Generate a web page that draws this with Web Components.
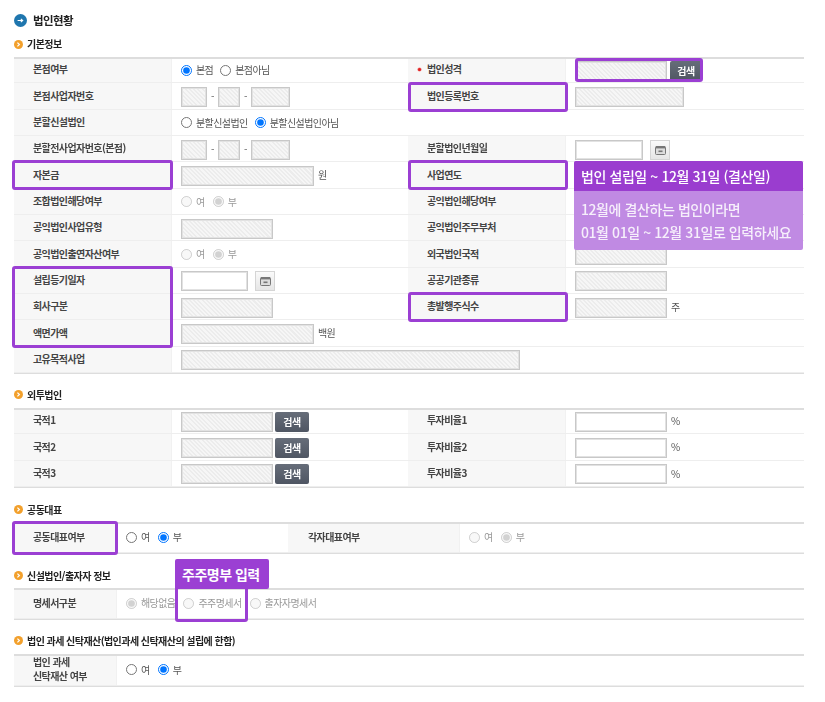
<!DOCTYPE html>
<html lang="ko"><head><meta charset="utf-8">
<style>
html,body{margin:0;background:#fff}
body{font:10px/14px "Noto Sans CJK KR","Noto Sans",sans-serif;color:#333;letter-spacing:-.58px}
</style></head><body>
<corp-page>
  <page-title>법인현황</page-title>
  <sec-title style="margin-top:10px">기본정보</sec-title>
  <form-grid columns="158px 236px 158px 1fr" style="margin-top:6px" rows="26.33px">
    <f-th>본점여부</f-th>
    <f-td><r-opt checked>본점</r-opt><r-opt gap="7">본점아님</r-opt></f-td>
    <f-th req>법인성격</f-th>
    <f-td><f-in w="92"></f-in><f-btn style="margin-left:3px">검색</f-btn></f-td>

    <f-th>본점사업자번호</f-th>
    <f-td><f-in w="26"></f-in><f-dash></f-dash><f-in w="22"></f-in><f-dash></f-dash><f-in w="39"></f-in></f-td>
    <f-th>법인등록번호</f-th>
    <f-td><f-in w="109"></f-in></f-td>

    <f-th>분할신설법인</f-th>
    <f-td span="3"><r-opt>분할신설법인</r-opt><r-opt checked gap="7">분할신설법인아님</r-opt></f-td>

    <f-th>분할전사업자번호(본점)</f-th>
    <f-td><f-in w="26"></f-in><f-dash></f-dash><f-in w="22"></f-in><f-dash></f-dash><f-in w="39"></f-in></f-td>
    <f-th>분할법인년월일</f-th>
    <f-td><f-in w="68" blank></f-in><f-cal></f-cal></f-td>

    <f-th>자본금</f-th>
    <f-td><f-in w="133"></f-in><f-unit>원</f-unit></f-td>
    <f-th>사업연도</f-th>
    <f-td></f-td>

    <f-th>조합법인해당여부</f-th>
    <f-td><r-opt disabled>여</r-opt><r-opt disabled checked gap="8">부</r-opt></f-td>
    <f-th>공익법인해당여부</f-th>
    <f-td></f-td>

    <f-th>공익법인사업유형</f-th>
    <f-td><f-in w="92"></f-in></f-td>
    <f-th>공익법인주무부처</f-th>
    <f-td></f-td>

    <f-th>공익법인출연자산여부</f-th>
    <f-td><r-opt disabled>여</r-opt><r-opt disabled checked gap="8">부</r-opt></f-td>
    <f-th>외국법인국적</f-th>
    <f-td><f-in w="92"></f-in></f-td>

    <f-th>설립등기일자</f-th>
    <f-td><f-in w="67" blank></f-in><f-cal></f-cal></f-td>
    <f-th>공공기관종류</f-th>
    <f-td><f-in w="92"></f-in></f-td>

    <f-th>회사구분</f-th>
    <f-td><f-in w="92"></f-in></f-td>
    <f-th>총발행주식수</f-th>
    <f-td><f-in w="92"></f-in><f-unit>주</f-unit></f-td>

    <f-th>액면가액</f-th>
    <f-td span="3"><f-in w="133"></f-in><f-unit>백원</f-unit></f-td>

    <f-th>고유목적사업</f-th>
    <f-td span="3"><f-in w="339"></f-in></f-td>
  </form-grid>

  <sec-title style="margin-top:14px">외투법인</sec-title>
  <form-grid columns="158px 236px 158px 1fr" style="margin-top:6px" rows="26.33px">
    <f-th>국적1</f-th><f-td><f-in w="92"></f-in><f-btn style="margin-left:2px;width:34px">검색</f-btn></f-td>
    <f-th>투자비율1</f-th><f-td><f-in w="92" blank></f-in><f-unit>%</f-unit></f-td>
    <f-th>국적2</f-th><f-td><f-in w="92"></f-in><f-btn style="margin-left:2px;width:34px">검색</f-btn></f-td>
    <f-th>투자비율2</f-th><f-td><f-in w="92" blank></f-in><f-unit>%</f-unit></f-td>
    <f-th>국적3</f-th><f-td><f-in w="92"></f-in><f-btn style="margin-left:2px;width:34px">검색</f-btn></f-td>
    <f-th>투자비율3</f-th><f-td><f-in w="92" blank></f-in><f-unit>%</f-unit></f-td>
  </form-grid>

  <sec-title style="margin-top:15px">공동대표</sec-title>
  <form-grid columns="104px 170px 172px 1fr" style="margin-top:5px" rows="31px">
    <f-th>공동대표여부</f-th>
    <f-td style="padding-left:8px"><r-opt>여</r-opt><r-opt checked gap="8">부</r-opt></f-td>
    <f-th style="padding-left:20px">각자대표여부</f-th>
    <f-td><r-opt disabled>여</r-opt><r-opt disabled checked gap="8">부</r-opt></f-td>
  </form-grid>

  <sec-title style="margin-top:15px">신설법인/출자자 정보</sec-title>
  <form-grid columns="103px 1fr" style="margin-top:5px" rows="31px">
    <f-th>명세서구분</f-th>
    <f-td style="padding-left:9px"><r-opt disabled checked>해당없음</r-opt><r-opt disabled gap="8">주주명세서</r-opt><r-opt disabled gap="8">출자자명세서</r-opt></f-td>
  </form-grid>

  <sec-title style="margin-top:14px">법인 과세 신탁재산(법인과세 신탁재산의 설립에 한함)</sec-title>
  <form-grid columns="103px 1fr" style="margin-top:6px" rows="32px">
    <f-th>법인 과세<br>신탁재산 여부</f-th>
    <f-td><r-opt>여</r-opt><r-opt checked gap="8">부</r-opt></f-td>
  </form-grid>

  <hi-frame x="575" y="58" w="128" h="24"></hi-frame>
  <hi-frame x="408" y="82" w="160" h="30"></hi-frame>
  <hi-frame x="12" y="160" w="161" h="30"></hi-frame>
  <hi-frame x="408" y="160" w="160" h="30"></hi-frame>
  <hi-frame x="12" y="266" w="161" h="82"></hi-frame>
  <hi-frame x="408" y="292" w="160" h="30"></hi-frame>
  <hi-frame x="12" y="521" w="106" h="34"></hi-frame>
  <hi-frame x="175" y="585" w="73" h="37"></hi-frame>
  <note-box style="left:574px;top:161px">
    <span slot="head">법인 설립일 ~ 12월 31일 (결산일)</span>
    12월에 결산하는 법인이라면<br>01월 01일 ~ 12월 31일로 입력하세요
  </note-box>
  <tab-tag style="left:175px;top:559px">주주명부 입력</tab-tag>
</corp-page>
<script>
const def=(name,css,html,extra)=>{
  customElements.define(name,class extends HTMLElement{
    constructor(){super();this.attachShadow({mode:'open'}).innerHTML='<style>'+css+'</style>'+html;}
    connectedCallback(){extra&&extra(this);}
  });
};
const soft='filter:blur(.3px);';
def('corp-page',':host{display:block;position:relative;width:825px;height:702px;box-sizing:border-box;padding:13px 21px 0 14px;overflow:hidden}','<slot></slot>');
def('page-title',':host{display:flex;align-items:center;gap:6px;height:14px;font-size:11.5px;font-weight:700;color:#222;letter-spacing:-.6px;'+soft+'}',
 '<svg width="13" height="13" viewBox="0 0 13 13"><circle cx="6.5" cy="6.5" r="6.5" fill="#1f76ae"/><path d="M3.6 6.5h5M6.8 4.8l1.9 1.7-1.9 1.7" fill="none" stroke="#fff" stroke-width="1.1"/></svg><slot></slot>');
def('sec-title',':host{display:flex;align-items:center;gap:4px;height:14px;font-size:10px;font-weight:700;color:#222;letter-spacing:-.55px;'+soft+'}',
 '<svg width="9" height="9" viewBox="0 0 9 9"><circle cx="4.5" cy="4.5" r="4.5" fill="#f2a02c"/><path d="M3.4 2.6l2 1.9-2 1.9" fill="none" stroke="#fff" stroke-width="1.2"/></svg><slot></slot>');
def('form-grid',':host{display:grid;position:relative;border-bottom:1px solid #ddd;width:790px;box-sizing:content-box;'+soft+'}:host::before{content:"";position:absolute;z-index:1;left:0;right:0;top:0;height:2px;background:#ddd}','<slot></slot>',el=>{
  el.style.gridTemplateColumns=el.getAttribute('columns');
  el.style.gridAutoRows=el.getAttribute('rows');
});
def('f-th',':host{display:flex;align-items:center;background:#f7f7f7;box-shadow:inset 0 -1px 0 #eee,inset -1px 0 0 #f1f1f1;padding-left:19px;padding-bottom:2px;box-sizing:border-box;font-weight:700;color:#444;line-height:13.5px;position:relative;min-width:0}:host([req])::before{content:"";position:absolute;left:10px;top:11px;width:3px;height:3px;border-radius:50%;background:#e02020;box-shadow:0 0 0 .6px #f08080}','<span><slot></slot></span>');
def('f-td',':host{display:flex;align-items:center;padding-left:9px;box-sizing:border-box;box-shadow:inset 0 -1px 0 #eee;color:#555;min-width:0}','<slot></slot>',el=>{
  const s=el.getAttribute('span'); if(s) el.style.gridColumn='span '+s;
});
def('f-in',`:host{display:block;height:20px;margin-top:1px;box-sizing:border-box;border:1px solid #c8c8c8;box-shadow:inset 0 0 0 1px #e2e2e2;flex:none;
 background:repeating-linear-gradient(45deg,#f6f6f6 0 1.5px,#ececec 1.5px 3px)}:host([blank]){background:#fff}`,'',el=>{el.style.width=el.getAttribute('w')+'px'});
def('f-dash',':host{display:block;width:11px;text-align:center;color:#666;flex:none}','-');
def('f-unit',':host{display:block;margin-left:4px;color:#555;flex:none}','<slot></slot>');
def('f-btn',':host{display:flex;align-items:center;justify-content:center;flex:none;width:32px;height:20px;margin-top:1px;border-radius:2px;background:linear-gradient(#666d79,#4f5663);color:#fff;font-weight:700;letter-spacing:-.5px}','<slot></slot>');
def('f-cal',':host{display:flex;align-items:center;justify-content:center;flex:none;width:20px;height:20px;margin:1px 0 0 7px;box-sizing:border-box;border:1px solid #d5d5d5;background:linear-gradient(#fafafa,#e6e6e6)}',
 '<svg width="11" height="10" viewBox="0 0 11 10"><rect x=".5" y="1.5" width="10" height="8" rx="1" fill="#ddd" stroke="#777"/><rect x="1" y="1" width="9" height="2.4" fill="#777"/><rect x="3.5" y="5.5" width="4" height="1.6" fill="#777"/></svg>');
def('r-opt',':host{display:inline-flex;align-items:center;gap:4px;flex:none;color:#555;white-space:nowrap}:host([disabled]){color:#999}input{margin:0;width:11px;height:11px;flex:none}','<input type="radio" tabindex="-1"><span><slot></slot></span>',el=>{
  const i=el.shadowRoot.querySelector('input');
  i.checked=el.hasAttribute('checked'); i.disabled=el.hasAttribute('disabled');
  if(el.getAttribute('gap')) el.style.marginLeft=el.getAttribute('gap')+'px';
});
def('hi-frame',':host{position:absolute;z-index:2;box-sizing:border-box;border:3px solid #9b3fd3;border-radius:3px;pointer-events:none}','',el=>{
  el.style.cssText+=`left:${el.getAttribute('x')}px;top:${el.getAttribute('y')}px;width:${el.getAttribute('w')}px;height:${el.getAttribute('h')}px`;
});
def('note-box',':host{position:absolute;z-index:2;width:229px;height:89px;border-radius:2px;overflow:hidden;background:#c08ae3;color:#f6effb;font-size:14px;font-weight:500;letter-spacing:-.42px;line-height:22.5px}header{height:30px;background:#9a3dcf;padding-left:7px;display:flex;align-items:center;color:#fff}main{padding:7px 0 0 7px}','<header><slot name="head"></slot></header><main><slot></slot></main>');
def('tab-tag',':host{position:absolute;z-index:2;width:94px;height:30px;box-sizing:border-box;padding-left:7px;display:flex;align-items:center;background:#9b3fd3;border-radius:2px;color:#fff;font-size:14px;font-weight:700;letter-spacing:-.5px}','<slot></slot>');
</script>
</body></html>
